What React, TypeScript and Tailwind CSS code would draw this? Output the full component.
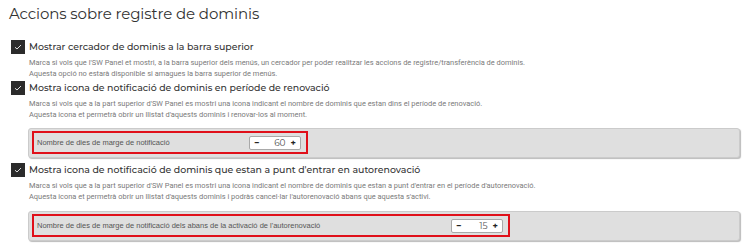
import { useState } from 'react'

type Opcio = {
  titol: string
  linies: string[]
  marge?: { label: string; valor: number; ample: string }
}

const opcions: Opcio[] = [
  {
    titol: 'Mostrar cercador de dominis a la barra superior',
    linies: [
      "Marca si vols que l'SW Panel et mostri, a la barra superior dels menús, un cercador per poder realitzar les accions de registre/transferència de dominis.",
      'Aquesta opció no estarà disponible si amagues la barra superior de menús.',
    ],
  },
  {
    titol: 'Mostra icona de notificació de dominis en període de renovació',
    linies: [
      "Marca si vols que a la part superior d'SW Panel es mostri una icona indicant el nombre de dominis que estan dins el període de renovació.",
      "Aquesta icona et permetrà obrir un llistat d'aquests dominis i renovar-los al moment.",
    ],
    marge: { label: 'Nombre de dies de marge de notificació', valor: 60, ample: 'w-[276px]' },
  },
  {
    titol: "Mostra icona de notificació de dominis que estan a punt d'entrar en autorenovació",
    linies: [
      "Marca si vols que a la part superior d'SW Panel es mostri una icona indicant el nombre de dominis que estan a punt d'entrar en el període d'autorenovació.",
      "Aquesta icona et permetrà obrir un llistat d'aquests dominis i podràs cancel·lar l'autorenovació abans que aquesta s'activi.",
    ],
    marge: {
      label: "Nombre de dies de marge de notificació dels abans de la activació de l'autorenovació",
      valor: 15,
      ample: 'w-[478px]',
    },
  },
]

function Stepper({ inicial }: { inicial: number }) {
  const [valor, setValor] = useState(inicial)
  return (
    <div className="flex items-center h-[14px] w-[52px] bg-white border border-[#a9a9a9] rounded-[2px] px-[4px] text-[9px] text-[#555]">
      <button className="font-bold text-[#222] leading-none" onClick={() => setValor(valor - 1)}>−</button>
      <span className="flex-1 text-right pr-[5px] leading-none">{valor}</span>
      <button className="font-bold text-[#222] leading-none" onClick={() => setValor(valor + 1)}>+</button>
    </div>
  )
}

export default function App() {
  return (
    <div className="w-[750px] h-[250px] bg-white overflow-hidden pl-[9px] pt-[5px] font-['Montserrat','Open_Sans',sans-serif]">
      <h1 className="text-[15px] text-[#333] font-normal leading-[18px] tracking-[-0.1px]">Accions sobre registre de dominis</h1>
      <div className="mt-[16px] flex flex-col">
        {opcions.map((o, i) => (
          <div key={i} className={`flex flex-col ${i === 1 ? 'mt-[1px]' : ''} ${i === 2 ? 'mt-[4px]' : ''}`}>
            <div className="flex items-center gap-[4px] pl-[2px] h-[16px]">
              <span className="w-[14px] h-[14px] bg-[#2b2b2b] flex items-center justify-center shrink-0">
                <svg width="8" height="6" viewBox="0 0 8 6">
                  <path d="M1 3.2 L3 5 L7 1" stroke="#ddd" strokeWidth="1" fill="none" />
                </svg>
              </span>
              <span className="text-[9.4px] font-medium text-[#333] leading-[16px]">{o.titol}</span>
            </div>
            <div className="pl-[20px] pt-[2px] font-['Roboto',sans-serif] text-[7.45px] leading-[11px] text-[#7a7a7a]">
              {o.linies.map((l, j) => (
                <p key={j}>{l}</p>
              ))}
            </div>
            {o.marge && (
              <div className={`ml-[19px] mr-[10px] ${i === 1 ? 'mt-[8px]' : 'mt-[9px]'} bg-[#dfdfdf] border border-[#cbcbcb] rounded-[3px] shadow-[1px_1px_1px_#bbb] px-[3px] pt-[2px] pb-[3px]`}>
                <div className={`${o.marge.ample} h-[23px] border-2 border-[#e0101a] flex items-center justify-between pl-[3px] pr-[5px]`}>
                  <span className="font-['Liberation_Sans',sans-serif] text-[7.5px] text-[#555]">{o.marge.label}</span>
                  <Stepper inicial={o.marge.valor} />
                </div>
              </div>
            )}
          </div>
        ))}
      </div>
    </div>
  )
}
